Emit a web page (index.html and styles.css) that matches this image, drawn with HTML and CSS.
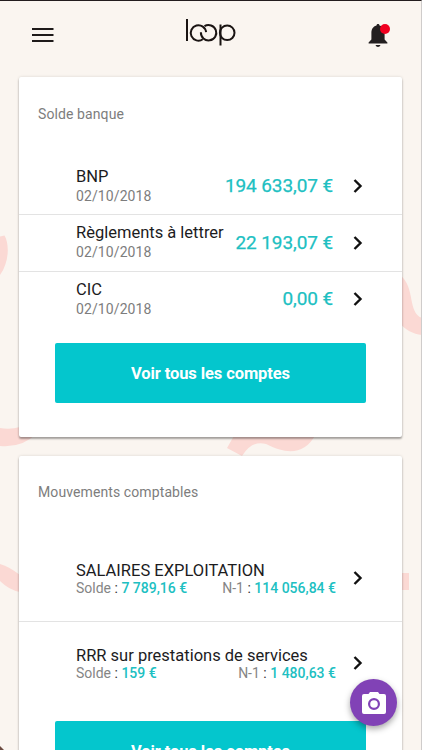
FILE: index.html
```
<!DOCTYPE html>
<html lang="fr">
<head>
<meta charset="utf-8">
<title>loop</title>
<link rel="stylesheet" href="styles.css">
</head>
<body>
<svg class="backdrop" viewBox="0 0 422 750" aria-hidden="true">
  <path d="M0 236.500L4.500 235.500C9 243 10 261 0 275Z"/>
  <path d="M0 428 Q10 430 20 427 L36 434 Q22 448 0 446Z"/>
  <path d="M235 434 L227 448 L242 456 Q252 440 266 444 C286 454 304 456 316 434Z"/>
  <path d="M400 275C416 288 407 312 422 318V335C413 334 405 330 400 323Z"/>
  <path d="M0 564 Q8 566 20 575 V592 Q9 590 0 581Z"/>
  <path d="M400 573H409V590H400Z"/>
  <path class="corner" d="M0 746L4 750H0Z"/>
</svg>
<div class="screen">
  <header class="topbar">
    <svg class="menu" width="24" height="24" viewBox="0 0 24 24"><path d="M1 5h21.500M1 11h21.500M1 17h21.500"/></svg>
    <svg class="logo" width="52" height="30" viewBox="185 17 52 30" role="img" aria-label="loop">
      <path d="M187 19V41"/>
      <path d="M202.800 39.300A7.700 7.700 0 1 1 206.100 32.200"/>
      <path d="M204.500 26.200A7.700 7.700 0 1 1 200.900 32.300"/>
      <path d="M220.500 24.500V45.500"/>
      <circle cx="227.200" cy="32.800" r="7.300"/>
    </svg>
    <div class="alerts">
      <svg width="20" height="24" viewBox="0 0 20 24"><path d="M10 1C11 1 11.500 1.600 11.500 2.600C15.200 3.600 16.600 6.600 16.600 10V16.600L19.400 19.400V20.600H.6V19.400L3.400 16.600V10C3.400 6.600 4.800 3.600 8.500 2.600C8.500 1.600 9 1 10 1ZM7.500 22h5c-.4 1.300-1.400 1.900-2.500 1.900S7.900 23.300 7.500 22Z"/></svg>
      <span class="dot"></span>
    </div>
  </header>

  <main>
    <section class="card">
      <h2>Solde banque</h2>
      <div class="row first">
        <div class="info"><div class="name">BNP</div><div class="date">02/10/2018</div></div>
        <div class="amount">194 633,07 €</div>
        <svg class="chevron" viewBox="0 0 10 14"><path d="M1.500 1L7.500 7L1.500 13"/></svg>
      </div>
      <div class="row">
        <div class="info"><div class="name">Règlements à lettrer</div><div class="date">02/10/2018</div></div>
        <div class="amount">22 193,07 €</div>
        <svg class="chevron" viewBox="0 0 10 14"><path d="M1.500 1L7.500 7L1.500 13"/></svg>
      </div>
      <div class="row last">
        <div class="info"><div class="name">CIC</div><div class="date">02/10/2018</div></div>
        <div class="amount">0,00 €</div>
        <svg class="chevron" viewBox="0 0 10 14"><path d="M1.500 1L7.500 7L1.500 13"/></svg>
      </div>
      <button class="action">Voir tous les comptes</button>
    </section>

    <section class="card">
      <h2>Mouvements comptables</h2>
      <div class="row tall">
        <div class="info">
          <div class="name">SALAIRES EXPLOITATION</div>
          <div class="figures"><span>Solde <i>:</i> <b>7 789,16 €</b></span><span>N-1 <i>:</i> <b>114 056,84 €</b></span></div>
        </div>
        <svg class="chevron" viewBox="0 0 10 14"><path d="M1.500 1L7.500 7L1.500 13"/></svg>
      </div>
      <div class="row tall last">
        <div class="info">
          <div class="name">RRR sur prestations de services</div>
          <div class="figures"><span>Solde <i>:</i> <b>159 €</b></span><span>N-1 <i>:</i> <b>1 480,63 €</b></span></div>
        </div>
        <svg class="chevron" viewBox="0 0 10 14"><path d="M1.500 1L7.500 7L1.500 13"/></svg>
      </div>
      <button class="action">Voir tous les comptes</button>
    </section>
  </main>
</div>
<button class="camera" aria-label="Photo">
  <svg width="24" height="22" viewBox="0 0 24 22"><path fill-rule="evenodd" d="M8 0h8l1.500 2h4.500a2 2 0 0 1 2 2v16a2 2 0 0 1-2 2H2a2 2 0 0 1-2-2V4a2 2 0 0 1 2-2h4.500ZM12 6a6 6 0 1 0 0 12a6 6 0 1 0 0-12ZM12 8.200a3.800 3.800 0 1 1 0 7.600a3.800 3.800 0 1 1 0-7.600Z"/></svg>
</button>
</body>
</html>
```

FILE: styles.css
```
* { box-sizing: border-box; }

body {
  margin: 0;
  height: 750px;
  overflow: hidden;
  background: #faf5f0;
  font-family: Roboto, sans-serif;
  color: #1c1c1e;
}

.backdrop {
  position: absolute;
  inset: 0;
  width: 422px;
  height: 750px;
  fill: #fbd9d4;
}
.backdrop .corner { fill: #6b4a40; }

.screen {
  position: relative;
  height: 750px;
  overflow: hidden;
  border-top: 1px solid #231c1e;
  border-right: 1px solid #cfcccb;
}

.topbar {
  display: flex;
  justify-content: space-between;
  align-items: flex-start;
  height: 76px;
  padding: 16px 31px 0;
}
.menu {
  margin-top: 7px;
  fill: none;
  stroke: #1e1a1a;
  stroke-width: 2.1;
}
.logo {
  margin-left: -1px;
  fill: none;
  stroke: #1a1413;
  stroke-width: 2;
}
.alerts {
  position: relative;
  width: 20px;
  height: 24px;
  margin: 6px 2px 0 0;
  fill: #231f20;
}
.dot {
  position: absolute;
  top: 1px;
  left: 12px;
  width: 10px;
  height: 10px;
  border-radius: 50%;
  background: #f00020;
}

main {
  display: flex;
  flex-direction: column;
  gap: 19px;
  padding: 0 19px;
}
.card {
  padding-bottom: 34px;
  border-radius: 2px;
  background: #fff;
  box-shadow: 0 2px 2px rgba(0, 0, 0, .32), 0 0 3px rgba(0, 0, 0, .14);
}
.card h2 {
  height: 81px;
  margin: 0;
  padding: 27px 19px 0;
  font-size: 14px;
  font-weight: 400;
  line-height: 20px;
  letter-spacing: .1px;
  color: #7d7d7d;
}
.card + .card h2 { padding-top: 26px; }

.row {
  display: flex;
  align-items: center;
  height: 57px;
  padding: 0 39px 1px 57px;
  border-bottom: 1px solid #e3e3e3;
}
.first .info { padding-top: 2px; }
.last { border-bottom-color: transparent; }
.last .amount, .last .chevron { margin-bottom: 2px; }
.tall { height: 85px; }
.info { flex: 1; white-space: nowrap; }
.name { font-size: 16.5px; line-height: 20px; }
.tall .name { padding-top: 1px; line-height: 19px; }
.date {
  font-size: 14px;
  line-height: 19px;
  letter-spacing: .1px;
  color: #7d7d7d;
}
.amount {
  font-size: 19px;
  letter-spacing: -.1px;
  color: #20bfc2;
  -webkit-text-stroke: .25px #20bfc2;
  white-space: nowrap;
}
.chevron {
  width: 10px;
  height: 14px;
  margin-left: 20px;
  fill: none;
  stroke: #111;
  stroke-width: 2.4;
}
.tall .chevron { margin-bottom: 2px; }
.figures {
  display: flex;
  justify-content: space-between;
  margin-right: -3px;
  font-size: 14px;
  line-height: 17px;
  color: #858585;
}
.figures i { font-style: normal; color: #333; }
.figures b { font-weight: 500; color: #20bfc2; }

.action {
  display: block;
  width: 311px;
  height: 60px;
  margin: 14px auto 0 36px;
  padding: 0;
  border: 0;
  border-radius: 2px;
  background: #04c6cd;
  font: 700 16.5px Roboto, sans-serif;
  letter-spacing: -.1px;
  color: #fff;
}

.camera {
  position: absolute;
  top: 679px;
  left: 350px;
  display: flex;
  align-items: center;
  justify-content: center;
  width: 47px;
  height: 47px;
  padding: 0;
  border: 0;
  border-radius: 50%;
  background: #8142b6;
  fill: #fff;
  box-shadow: 0 3px 6px rgba(0, 0, 0, .35);
}
```
